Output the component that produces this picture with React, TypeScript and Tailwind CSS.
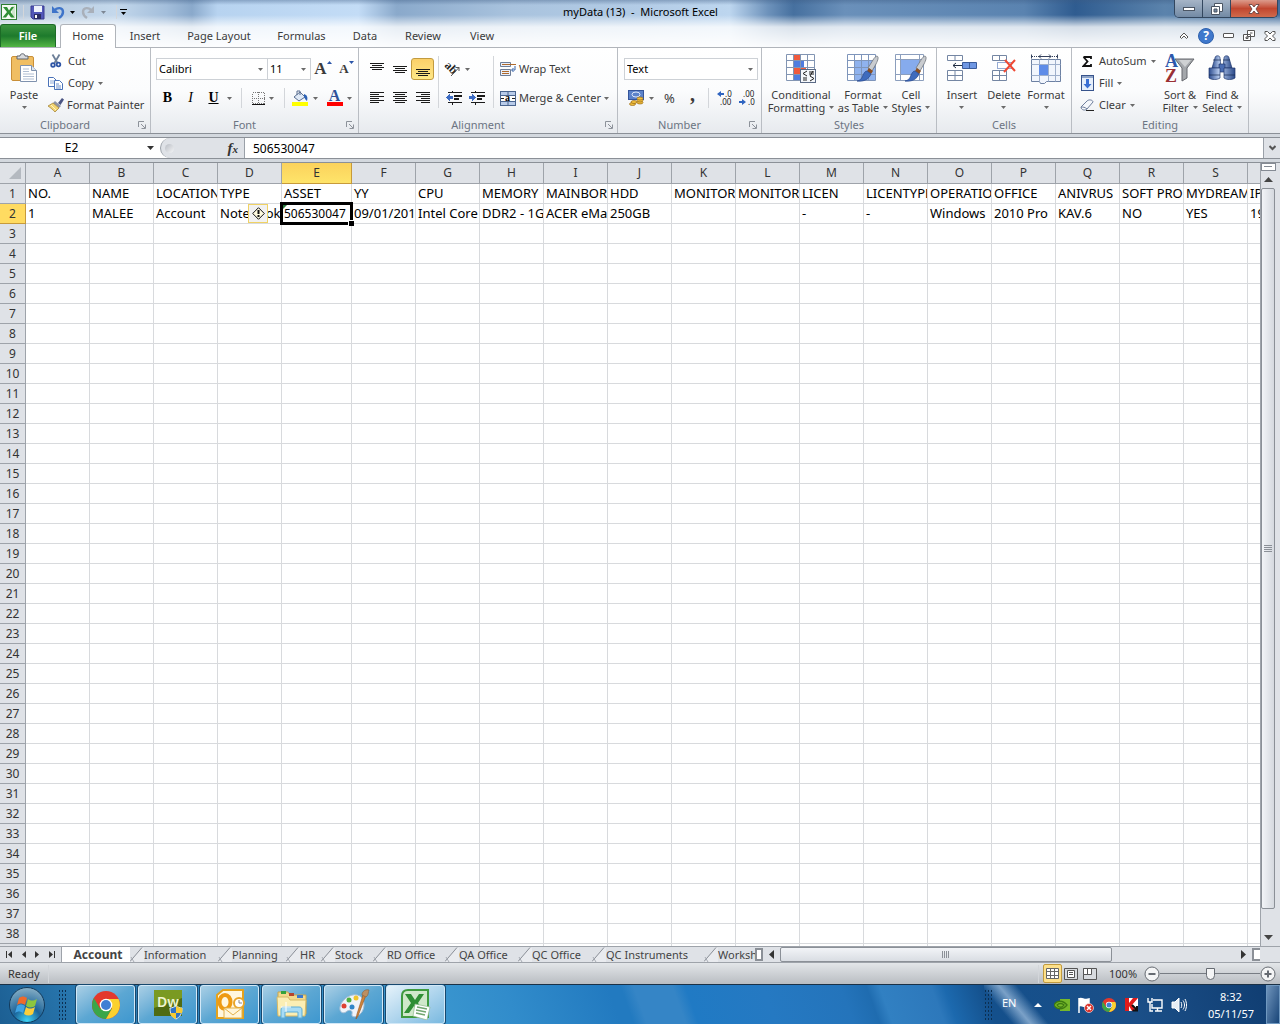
import type { ReactNode } from "react";
import clsx from "clsx";

const columns = [
  { id: "A", width: "w-16", head: "NO.", value: "1" },
  { id: "B", width: "w-16", head: "NAME", value: "MALEE" },
  { id: "C", width: "w-16", head: "LOCATION", value: "Account" },
  { id: "D", width: "w-16", head: "TYPE", value: "Notebook" },
  { id: "E", width: "w-[70px]", head: "ASSET", value: "506530047" },
  { id: "F", width: "w-16", head: "YY", value: "09/01/2014" },
  { id: "G", width: "w-16", head: "CPU", value: "Intel Core" },
  { id: "H", width: "w-16", head: "MEMORY", value: "DDR2 - 1G" },
  { id: "I", width: "w-16", head: "MAINBORD", value: "ACER eMa" },
  { id: "J", width: "w-16", head: "HDD", value: "250GB" },
  { id: "K", width: "w-16", head: "MONITOR", value: "" },
  { id: "L", width: "w-16", head: "MONITOR", value: "" },
  { id: "M", width: "w-16", head: "LICEN", value: "-" },
  { id: "N", width: "w-16", head: "LICENTYPE", value: "-" },
  { id: "O", width: "w-16", head: "OPERATION", value: "Windows" },
  { id: "P", width: "w-16", head: "OFFICE", value: "2010 Pro" },
  { id: "Q", width: "w-16", head: "ANIVRUS", value: "KAV.6" },
  { id: "R", width: "w-16", head: "SOFT PRO", value: "NO" },
  { id: "S", width: "w-16", head: "MYDREAM", value: "YES" },
  { id: "T", width: "w-16", head: "IP", value: "192" },
];

const rows = Array.from({ length: 39 }, (_, i) => i + 1);

const menuTabs = [
  { name: "Insert", width: "w-[58px]" },
  { name: "Page Layout", width: "w-[90px]" },
  { name: "Formulas", width: "w-[75px]" },
  { name: "Data", width: "w-[52px]" },
  { name: "Review", width: "w-16" },
  { name: "View", width: "w-[54px]" },
];

const sheets = [
  { name: "Information", width: "w-[88px]" },
  { name: "Planning", width: "w-[68px]" },
  { name: "HR", width: "w-[35px]" },
  { name: "Stock", width: "w-[52px]" },
  { name: "RD Office", width: "w-[72px]" },
  { name: "QA Office", width: "w-[73px]" },
  { name: "QC Office", width: "w-[74px]" },
  { name: "QC Instruments", width: "w-[112px]" },
  { name: "Workshop", width: "w-[90px]" },
];

const Caret = ({ className = "text-[#6a6a6a]" }: { className?: string }) => (
  <svg width="5" height="3" viewBox="0 0 5 3" className={clsx("shrink-0", className)} fill="currentColor">
    <path d="M0 0h5L2.500 3z" />
  </svg>
);

const Divider = ({ className = "h-5" }: { className?: string }) => (
  <span className={clsx("w-px shrink-0 bg-[#d3d6da]", className)} />
);

/* ---------- small icons ---------- */

const ExcelMark = () => (
  <svg width="16" height="16" viewBox="0 0 16 16">
    <rect x=".5" y=".5" width="15" height="15" fill="#f4faf3" stroke="#2e7d32" />
    <path d="M11 2h3v12h-3z" fill="#cfe6cd" />
    <path d="M2 3h4l2 3.500L10.500 3H13L9.500 8l4 5.500H10L7.500 10 5 13.500H1.500L6 8z" fill="#2f8f35" />
  </svg>
);

const SaveIcon = () => (
  <svg width="15" height="15" viewBox="0 0 15 15">
    <path d="M1 1h13v13H3l-2-2z" fill="#5257b8" stroke="#3a3d91" />
    <path d="M4 1h8v6H4z" fill="#eef2fb" />
    <path d="M4 9h7v5H4z" fill="#2b2d63" />
    <path d="M5 10h2v3H5z" fill="#fff" />
  </svg>
);

const UndoIcon = ({ color, flip }: { color: string; flip?: boolean }) => (
  <svg width="14" height="14" viewBox="0 0 14 14" className={flip ? "-scale-x-100" : ""}>
    <path d="M3 6c3-4 9-4 9 1 0 2-1 4-4 6" fill="none" stroke={color} strokeWidth="2.400" />
    <path d="M1 1v7h7z" fill={color} />
  </svg>
);

const CutIcon = () => (
  <svg width="12" height="14" viewBox="0 0 12 14" fill="none">
    <path d="M2.500 0.500 7.500 9M9.500 0.500 4.500 9" stroke="#6d7f98" strokeWidth="1.800" />
    <circle cx="3" cy="11" r="1.800" stroke="#2e55a5" strokeWidth="1.800" />
    <circle cx="8.500" cy="10.500" r="1.800" stroke="#2e55a5" strokeWidth="1.800" />
  </svg>
);

const CopyIcon = () => (
  <svg width="16" height="13" viewBox="0 0 16 13" fill="#fff" stroke="#4a72b8">
    <path d="M.5.5h5l3 3v6h-8z" />
    <path d="M2 4h4M2 6h4" stroke="#8fa9d6" />
    <path d="M6.500 3.500h5l3 3v6h-8z" />
    <path d="M8 7h3M8 9h5M8 11h5" stroke="#6d8fca" />
  </svg>
);

const BrushIcon = () => (
  <svg width="16" height="14" viewBox="0 0 16 14">
    <path d="M10 5l4-5 2 1.500L12.500 7z" fill="#4b5582" />
    <path d="M7 3l6 5-2 2-6-5z" fill="#8d93a5" />
    <path d="M5 5l6 5-4 4C5 12 3 10 0 8z" fill="#f1d473" stroke="#9c7a2c" strokeWidth=".7" />
    <path d="M3 7l5 5" stroke="#fff4c2" />
  </svg>
);

const PasteIcon = () => (
  <svg width="28" height="32" viewBox="0 0 28 32">
    <rect x="1.500" y="3.500" width="22" height="24" rx="1.500" fill="#f0be63" stroke="#c98f38" />
    <path d="M7 6V3h3c0-3 5-3 5 0h3v3z" fill="#d8dade" stroke="#60656d" />
    <path d="M10.500 12.500h11l5 5v11h-16z" fill="#fff" stroke="#7f92ae" />
    <path d="M21.500 12.500v5h5" fill="#dce5f1" stroke="#7f92ae" />
    <path d="M13 16h6M13 18.500h6M13 21h11M13 23.500h11M13 26h11" stroke="#b1bfd3" />
  </svg>
);

const Lines = ({ widths, top = 0, align = "center" }: { widths: number[]; top?: number; align?: string }) => (
  <svg width="14" height="14" viewBox="0 0 14 14" fill="#1b1b1b" shapeRendering="crispEdges">
    {widths.map((w, i) => (
      <rect
        key={i}
        x={align === "left" ? 0 : align === "right" ? 14 - w : (14 - w) / 2}
        y={top + i * 2}
        width={w}
        height="1"
      />
    ))}
  </svg>
);

const IndentIcon = ({ flip }: { flip?: boolean }) => (
  <svg width="17" height="14" viewBox="0 0 17 14" shapeRendering="crispEdges">
    <path d="M2 1h14v1H2zM8 4h8v2H8zM8 7h5v2H8zM2 11h14v1H2zM6 0h1v2H6zM6 12h1v2H6z" fill="#1b1b1b" />
    <path d={flip ? "M0 5h3V3l4 3.500L3 10V8H0z" : "M7 5H4V3L0 6.500 4 10V8h3z"} fill="#3d6cc4" />
  </svg>
);

const OrientationIcon = () => (
  <svg width="17" height="16" viewBox="0 0 17 16">
    <text x="0" y="5" fontSize="12" fontWeight="700" fontFamily="Liberation Serif, serif" transform="rotate(45 0 5)" fill="#222">
      ab
    </text>
    <path d="M7 15L15 6.500M11.500 6.500H15v3.500" stroke="#555" fill="none" />
  </svg>
);

const WrapIcon = () => (
  <svg width="16" height="14" viewBox="0 0 16 14">
    <path d="M.5.5h10v4H.5zM.5 7.500h10v6H.5z" fill="#eaf0fa" stroke="#6d7d97" />
    <path d="M2 2.500h14M2 9.500h7M2 11.500h7" stroke="#b06a2c" />
    <path d="M15 4v4h-3M13.500 6L11.500 8l2 2" stroke="#3562a8" fill="none" />
  </svg>
);

const MergeIcon = () => (
  <svg width="16" height="15" viewBox="0 0 16 15">
    <rect x=".5" y=".5" width="15" height="14" fill="#b8cbe9" stroke="#4a658f" />
    <path d="M1 4.500h14M1 10.500h14M8 1v3M8 11v3" stroke="#4a658f" />
    <path d="M1 5h14v5H1z" fill="#fff" />
    <path d="M1 7.500h3M12 7.500h3" stroke="#222" />
    <text x="5" y="10" fontSize="10" fontWeight="700" fontFamily="Liberation Serif, serif">
      a
    </text>
  </svg>
);

const BordersIcon = () => (
  <svg width="13" height="13" viewBox="0 0 13 13" shapeRendering="crispEdges">
    <path d="M.5.5h12v11H.5zM6.500 0v12M0 6.500h13" fill="none" stroke="#777" strokeDasharray="1 1" />
    <path d="M0 12h13v1H0z" fill="#111" />
  </svg>
);

const FillColorIcon = () => (
  <svg width="17" height="16" viewBox="0 0 17 16">
    <path d="M2 7l6-5 5 5-6 4z" fill="#dfe9f6" stroke="#5b6f91" />
    <path d="M5 5V1h3v4" fill="none" stroke="#5b6f91" />
    <path d="M12 4c3 1 4 3 3 7-2-1-2-3-3-4z" fill="#2d62b5" />
    <path d="M0 12h16v4H0z" fill="#ffff00" />
  </svg>
);

const CurrencyIcon = () => (
  <svg width="17" height="16" viewBox="0 0 17 16">
    <rect x=".5" y=".5" width="15" height="9" fill="#5b82ca" stroke="#34559b" />
    <ellipse cx="8" cy="4.500" rx="4" ry="2.500" fill="none" stroke="#dce7fa" />
    <g fill="#f1bf3c" stroke="#96681a" strokeWidth=".7">
      <ellipse cx="12" cy="12.500" rx="3" ry="1.500" />
      <ellipse cx="12" cy="10.500" rx="3" ry="1.500" />
      <ellipse cx="12" cy="8.500" rx="3" ry="1.500" />
      <ellipse cx="4.500" cy="14" rx="3" ry="1.500" />
      <ellipse cx="6" cy="12" rx="3" ry="1.500" />
    </g>
  </svg>
);

const DecimalIcon = ({ more }: { more?: boolean }) => (
  <svg width="17" height="16" viewBox="0 0 17 16" fontSize="8" fontFamily="Noto Sans, sans-serif" fill="#222">
    <path d={more ? "M8 3H5V1L1 4l4 3V5h3z" : "M0 11h3V9l4 3-4 3v-2H0z"} fill="#2f64c0" />
    <text x={more ? 9 : 4} y="7">{more ? ".0" : ".00"}</text>
    <text x={more ? 4 : 9} y="15">{more ? ".00" : ".0"}</text>
  </svg>
);

const gridPath = "M.5.5h28v26H.5zM.5 6.500h28M.5 13.500h28M.5 20.500h28M7.500.5v26M14.500.5v26M21.500.5v26";

const PaintBrush = () => (
  <>
    <path d="M30 2c2 1 1 4-1 8l-4 7-4-3 5-8c1-2 3-4 4-4z" fill="#c9ccd0" stroke="#70757c" strokeWidth=".8" />
    <path d="M22 14l4 3-2 3-4-3z" fill="#8b4f22" />
    <path d="M20 17l4 3c-2 5-7 8-14 7 4-1 5-3 6-6 1-2 2-4 4-4z" fill="#3f6bbd" stroke="#27488c" strokeWidth=".7" />
  </>
);

const ConditionalIcon = () => (
  <svg width="31" height="30" viewBox="0 0 31 30">
    <rect x=".5" y=".5" width="28" height="26" fill="#fff" />
    <path d="M7 1h7v5H7zM7 13h13v7H7z" fill="#f05a3d" />
    <path d="M7 7h11v6H7zM7 20h7v6H7z" fill="#4f7de0" />
    <path d={gridPath} fill="none" stroke="#8295b3" />
    <rect x="14.500" y="15.500" width="15" height="13" fill="#f5f8fc" stroke="#5a6a85" />
    <path d="M21 17l-4 2.500 4 2.500M17 24h4M17 26h4M23 18h5M23 20h5M27 17l-3 5M24 22l4 2.500-4 2.500" fill="none" stroke="#222" />
  </svg>
);

const FormatTableIcon = () => (
  <svg width="32" height="30" viewBox="0 0 32 30">
    <rect x=".5" y=".5" width="28" height="26" fill="#fff" />
    <path d="M8 7h20v19H8z" fill="#8fb2ee" />
    <path d={gridPath} fill="none" stroke="#7e95bb" />
    <PaintBrush />
  </svg>
);

const CellStylesIcon = () => (
  <svg width="32" height="30" viewBox="0 0 32 30">
    <path d="M.5.500h28v26H.5zM.5 5.500h28M.5 20.500h28M5.500.5v26M24.500.5v26" fill="#fff" stroke="#8b9ebd" />
    <path d="M6 6h18v14H6z" fill="#86abed" />
    <PaintBrush />
  </svg>
);

const InsertCellsIcon = () => (
  <svg width="31" height="30" viewBox="0 0 31 30" fill="#fff" stroke="#7486a3">
    <path d="M.5 1.500h15v5H.5zM8 1.500v5M.5 16.500h15v10H.5zM8 16.500v10M.5 21.500h15" />
    <path d="M15.500 8.500h14v6h-14zM22.500 8.500v6" fill="#6f97e3" stroke="#3a5b9b" />
    <path d="M6 11.500h9M9 9l-3 2.500L9 14" fill="none" stroke="#222f44" />
  </svg>
);

const DeleteCellsIcon = () => (
  <svg width="31" height="30" viewBox="0 0 31 30" fill="#fff" stroke="#7486a3">
    <path d="M3.500 1.500h14v5h-14zM10.500 1.500v5M3.500 16.500h14v10h-14zM10.500 16.500v10M3.500 21.500h14" />
    <path d="M8.500 8.500h14v6h-14z" strokeDasharray="1 1" stroke="#2f58a8" />
    <path d="M16 6l10 11M26 6L15 18" stroke="#ef4934" strokeWidth="2" />
  </svg>
);

const FormatCellsIcon = () => (
  <svg width="31" height="31" viewBox="0 0 31 31" fill="none">
    <path d="M1 2.500h25" stroke="#34405c" strokeDasharray="1 1" />
    <path d="M8 2.500h12M10 .5L8 2.500l2 2M18 .5l2 2-2 2M.5.5v4M26.500.5v4" stroke="#34405c" />
    <path d="M.5 5.500h29v22h-14l-2 2h-4l-1-2h-8z" fill="#f2f6fd" stroke="#6d81a3" />
    <path d="M.5 10.500h29M.5 21.500h29M8.500 5.500v22M17.500 5.500v22M24.500 5.500v22" stroke="#9fb0cc" />
    <path d="M8 11h9v10H8z" fill="#5e8ce8" />
  </svg>
);

const SigmaIcon = () => (
  <svg width="11" height="11" viewBox="0 0 11 11">
    <path d="M1.500 1h7.500v2M1.500 1l4 4.500-4 4.500h7.500V8" fill="none" stroke="#111" strokeWidth="1.800" />
  </svg>
);

const FillIcon = () => (
  <svg width="13" height="16" viewBox="0 0 13 16">
    <rect x=".5" y=".5" width="12" height="15" fill="#e6effb" stroke="#38548c" />
    <path d="M1 1h11v2H1z" fill="#8ea4c8" />
    <path d="M5 4h3v5h2.500l-4 4.500-4-4.500H5z" fill="#3a6fd4" />
  </svg>
);

const EraserIcon = () => (
  <svg width="15" height="12" viewBox="0 0 15 12">
    <path d="M1 8l6-6c2-2 6-1 6 1L7 10c-2 2-6 1-6-2z" fill="#f5f7fb" stroke="#6e7e9c" />
    <path d="M1 8c2 0 4 0 6 2" fill="none" stroke="#6e7e9c" />
    <path d="M6 11.500h8" stroke="#222" />
  </svg>
);

const SortIcon = () => (
  <svg width="30" height="30" viewBox="0 0 30 30" fontFamily="Liberation Serif, serif" fontWeight="700" fontSize="18">
    <path d="M10 5h19l-7 9v10l-5 3V14z" fill="#a4a7ab" stroke="#66696e" />
    <path d="M14 6h12l-6 7z" fill="#cfd1d3" />
    <text x="0" y="13" fill="#2c57ab">A</text>
    <text x="0" y="28" fill="#9a3034">Z</text>
  </svg>
);

const FindIcon = () => (
  <svg width="28" height="28" viewBox="0 0 28 28" stroke="#20386e" strokeWidth=".7">
    <defs>
      <linearGradient id="barrel">
        <stop offset="0" stopColor="#2d4d8f" />
        <stop offset=".4" stopColor="#bcd0f2" />
        <stop offset="1" stopColor="#2b4a8a" />
      </linearGradient>
    </defs>
    <path d="M7 3c0-3 5-3 5 0l1 10H4zM16 3c0-3 5-3 5 0l3 10h-9z" fill="url(#barrel)" />
    <path d="M11 9h6v8h-6z" fill="#4a6db3" />
    <path d="M1 13h11v10c-3 2-8 2-11 0zM16 13h11v10c-3 2-8 2-11 0z" fill="url(#barrel)" />
    <path d="M1 20h11M16 20h11M5 5h8M15 5h7" stroke="#16284f" />
  </svg>
);

const Chrome = ({ size }: { size: number }) => (
  <svg width={size} height={size} viewBox="0 0 28 28">
    <circle cx="14" cy="14" r="14" fill="#e3382c" />
    <path d="M1.900 7A14 14 0 0 0 14 28l6-10.500L8 17.500z" fill="#3aa648" />
    <path d="M14 28A14 14 0 0 0 26.600 8H14l6 9.500z" fill="#fbd12f" />
    <circle cx="14" cy="14" r="6.300" fill="#fff" />
    <circle cx="14" cy="14" r="5" fill="#3f7fd4" />
  </svg>
);

/* ---------- ribbon pieces ---------- */

const Group = ({ label, width, launcher, children }: { label: string; width: string; launcher?: boolean; children: ReactNode }) => (
  <section className={clsx("flex h-full shrink-0 flex-col border-r border-[#b9bdc3]", width)}>
    <div className="h-[68px]">{children}</div>
    <div className={clsx("flex h-[17px] items-center text-[#6b7482]", launcher && "pr-1")}>
      <h2 className={clsx("flex-1 text-center", launcher && "pr-2")}>{label}</h2>
      {launcher && (
        <button aria-label={`${label} settings`}>
          <svg width="8" height="8" viewBox="0 0 8 8" fill="none" stroke="#8d929a">
            <path d="M.5 6V.5H6M3 3l4 4M7.500 3.500v4h-4" />
          </svg>
        </button>
      )}
    </div>
  </section>
);

const SmallButton = ({ icon, label, caret, className }: { icon: ReactNode; label: string; caret?: boolean; className?: string }) => (
  <button className={clsx("flex h-[22px] items-center gap-1 whitespace-nowrap", className)}>
    <span className="flex w-4 justify-center">{icon}</span>
    <span>{label}</span>
    {caret && <Caret />}
  </button>
);

const LargeButton = ({ icon, lines, width }: { icon: ReactNode; lines: string[]; width: string }) => (
  <button className={clsx("flex flex-col items-center gap-[3px] pt-[5px] leading-[13px]", width)}>
    <span className="flex h-8 items-center">{icon}</span>
    <span className="flex flex-col items-center whitespace-nowrap">
      <span>{lines[0]}</span>
      <span className="flex h-[13px] items-center gap-1">
        {lines[1]}
        <Caret />
      </span>
    </span>
  </button>
);

const IconButton = ({ label, active, caret, className = "w-[23px]", children }: { label: string; active?: boolean; caret?: boolean; className?: string; children: ReactNode }) => (
  <button
    aria-label={label}
    className={clsx(
      "flex h-[22px] shrink-0 items-center justify-center gap-1",
      active && "rounded-[3px] border border-[#c29b3f] bg-linear-to-b from-[#fbd069] to-[#fee887]",
      className
    )}
  >
    {children}
    {caret && <Caret />}
  </button>
);

const SelectBox = ({ label, value, className }: { label: string; value: string; className: string }) => (
  <label className={clsx("flex h-[22px] items-center border border-[#cdd1d6] bg-white pr-1 text-black", className)}>
    <span className="sr-only">{label}</span>
    <select defaultValue={value} className="min-w-0 flex-1 appearance-none pl-[2px]">
      <option>{value}</option>
    </select>
    <Caret />
  </label>
);

const Header = () => (
  <header className="border-b border-[#b0b4ba] bg-[linear-gradient(to_bottom,rgba(60,90,130,0.4)_0,rgba(255,255,255,0)_5px,rgba(255,255,255,0)_15px,rgba(255,255,255,0.8)_27px,rgba(255,255,255,0.96)_46px),linear-gradient(to_right,#b4c6d9_0,#c4d8ec_9%,#a3bedb_13%,#8aa9cb_15%,#b7d3f0_17%,#c3dcf6_28%,#8aa9cb_31%,#a9c3de_40%,#b3cce6_50%,#bdd6ef_57%,#6d92bb_60%,#46709f_62%,#6a90ba_66%,#5a83b0_80%,#2f5c90_84%,#5b83ac_91%,#456f9e_100%)]">
    <div className="flex h-6 items-start">
      <div className="flex h-6 flex-1 items-center gap-[6px] pl-[1px]">
        <ExcelMark />
        <Divider className="h-[14px] bg-[#6d7b8d]" />
        <button aria-label="Save"><SaveIcon /></button>
        <button aria-label="Undo" className="flex items-center gap-[5px]">
          <UndoIcon color="#3f74c9" />
          <Caret className="text-black" />
        </button>
        <button aria-label="Redo" className="flex items-center gap-[6px]">
          <UndoIcon color="#a9b0ba" flip />
          <Caret className="text-[#7d8794]" />
        </button>
        <Divider className="ml-1 h-[14px] bg-[#4b5563]" />
        <button aria-label="Customize toolbar" className="-ml-[3px] flex flex-col items-center gap-[2px]">
          <span className="h-px w-[7px] bg-black" />
          <Caret className="text-black" />
        </button>
      </div>
      <h1 className="pt-1 text-[11px] leading-4 whitespace-pre text-black">myData (13)  -  Microsoft Excel</h1>
      <div className="flex flex-1 justify-end">
        <div className="mr-[2px] flex h-[18px] w-[104px] overflow-hidden rounded-b-[5px] border border-t-0 border-[#33475f]">
          <button aria-label="Minimize" className="flex w-7 items-center justify-center border-r border-[#33475f] bg-linear-to-b from-[#a6b5c7] to-[#738aa5]">
            <span className="h-1 w-3 border border-[#4b5563] bg-white" />
          </button>
          <button aria-label="Restore" className="flex w-7 items-center justify-center border-r border-[#33475f] bg-linear-to-b from-[#a6b5c7] to-[#738aa5]">
            <svg width="12" height="12" viewBox="0 0 12 12" fill="#fff" stroke="#4b5563">
              <path d="M3.500.5h8v8h-8z" />
              <path d="M.5 3.500h8v8h-8z" />
              <path d="M3 6h3v3H3z" fill="#738aa5" />
            </svg>
          </button>
          <button aria-label="Close" className="flex flex-1 items-center justify-center bg-linear-to-b from-[#dc9b8c] via-[#c1462f] to-[#d06a4c]">
            <svg width="12" height="10" viewBox="0 0 12 10" fill="#fff" stroke="#5c3a3a" strokeWidth=".8">
              <path d="M1 .5h3l2 2.500L8 .500h3L8 5l3 4.500H8L6 7 4 9.500H1L4 5z" />
            </svg>
          </button>
        </div>
      </div>
    </div>
    <nav className="flex h-[23px] items-end text-[#3b3b3b]">
      <button className="h-[23px] w-14 rounded-t-[3px] border border-b-0 border-[#1c6b26] bg-linear-to-b from-[#3c9440] via-[#1d7a2c] to-[#53b544] font-semibold text-white">
        File
      </button>
      <button className="z-10 -mb-px ml-1 h-6 w-14 rounded-t-[3px] border border-b-0 border-[#b0b4ba] bg-white pb-[2px]">
        Home
      </button>
      {menuTabs.map((tab) => (
        <button key={tab.name} className={clsx("h-[23px] whitespace-nowrap", tab.width)}>
          {tab.name}
        </button>
      ))}
      <div className="ml-auto flex h-[23px] items-center gap-[9px] pr-1 text-[#555]">
        <button aria-label="Collapse ribbon">
          <svg width="10" height="7" viewBox="0 0 10 7" fill="#fff" stroke="#555">
            <path d="M1 5l4-4 4 4-1.500 1.500L5 4 2.500 6.500z" />
          </svg>
        </button>
        <button aria-label="Help" className="flex size-4 items-center justify-center rounded-full border border-[#2e61ad] bg-[#3f78cc] text-[12px] font-bold text-white">
          ?
        </button>
        <button aria-label="Minimize workbook" className="h-[5px] w-[11px] rounded-[1px] border border-[#555] bg-white" />
        <button aria-label="Restore workbook">
          <svg width="12" height="11" viewBox="0 0 12 11" fill="#fff" stroke="#555">
            <path d="M4.500.5h7v6h-7zM.5 4.500h7v6h-7zM3 7h2v1.500H3zM7 3h2.500" />
          </svg>
        </button>
        <button aria-label="Close workbook">
          <svg width="12" height="10" viewBox="0 0 12 10" fill="#fff" stroke="#555">
            <path d="M1 .5h2.500L6 3 8.500.5H11v2L8.500 5 11 7.500v2H8.500L6 7 3.500 9.500H1v-2L3.500 5 1 2.500z" />
          </svg>
        </button>
      </div>
    </nav>
  </header>
);

const Ribbon = () => (
  <div className="flex h-[86px] overflow-hidden border-b border-[#8b9097] bg-linear-to-b from-white via-[#fbfcfd] to-[#e7eaee] text-[#3b3b3b]">
    <Group label="Clipboard" width="w-[151px]" launcher>
      <div className="flex pl-[6px]">
        <LargeButton icon={<PasteIcon />} lines={["Paste"]} width="w-9" />
        <div className="flex flex-col pt-[2px] pl-[6px]">
          <SmallButton icon={<CutIcon />} label="Cut" />
          <SmallButton icon={<CopyIcon />} label="Copy" caret />
          <SmallButton icon={<BrushIcon />} label="Format Painter" className="gap-[3px]" />
        </div>
      </div>
    </Group>

    <Group label="Font" width="w-[208px]" launcher>
      <div className="flex flex-col gap-[7px] pt-[10px] pl-[5px]">
        <div className="flex items-center">
          <SelectBox label="Font name" value="Calibri" className="w-28" />
          <SelectBox label="Font size" value="11" className="-ml-px w-11" />
          <IconButton label="Grow font" className="w-6">
            <span className="flex items-start font-['Liberation_Serif',serif] text-[17px] leading-5 font-bold">
              A
              <svg width="5" height="3" className="mt-[2px]" fill="#2a55a8"><path d="M0 3h5L2.500 0z" /></svg>
            </span>
          </IconButton>
          <IconButton label="Shrink font">
            <span className="flex items-start font-['Liberation_Serif',serif] text-[13px] leading-5 font-bold">
              A
              <svg width="5" height="3" className="mt-[2px]" fill="#2a55a8"><path d="M0 0h5L2.500 3z" /></svg>
            </span>
          </IconButton>
        </div>
        <div className="flex items-center font-['Liberation_Serif',serif] text-[14px] text-black">
          <IconButton label="Bold"><b>B</b></IconButton>
          <IconButton label="Italic"><i>I</i></IconButton>
          <IconButton label="Underline" caret className="w-9"><b className="mr-1 underline">U</b></IconButton>
          <Divider className="mx-[3px] h-5" />
          <IconButton label="Borders" caret className="w-9"><BordersIcon /></IconButton>
          <Divider className="mx-[3px] h-5" />
          <IconButton label="Fill color" caret className="w-[34px]"><FillColorIcon /></IconButton>
          <IconButton label="Font color" caret className="w-[34px]">
            <span className="flex w-4 flex-col items-center border-b-4 border-[#f00] text-[16px] leading-3 font-bold text-[#2f5299]">
              A
            </span>
          </IconButton>
        </div>
      </div>
    </Group>

    <Group label="Alignment" width="w-[259px]" launcher>
      <div className="flex h-full items-center pl-[6px]">
        <div className="flex flex-col gap-[7px] pt-[3px]">
          <div className="flex">
            <IconButton label="Top align"><Lines widths={[14, 10, 14, 10]} top={1} /></IconButton>
            <IconButton label="Middle align"><Lines widths={[14, 10, 14, 10]} top={4} /></IconButton>
            <IconButton label="Bottom align" active><Lines widths={[14, 10, 14, 10]} top={7} /></IconButton>
          </div>
          <div className="flex">
            <IconButton label="Align left"><Lines widths={[14, 9, 14, 9, 14, 9]} top={1} align="left" /></IconButton>
            <IconButton label="Center"><Lines widths={[14, 10, 14, 10, 14, 10]} top={1} /></IconButton>
            <IconButton label="Align right"><Lines widths={[14, 9, 14, 9, 14, 9]} top={1} align="right" /></IconButton>
          </div>
        </div>
        <Divider className="mx-1 h-[52px]" />
        <div className="flex flex-col gap-[7px] pt-[3px]">
          <IconButton label="Orientation" caret className="w-7"><OrientationIcon /></IconButton>
          <div className="flex">
            <IconButton label="Decrease indent"><IndentIcon /></IconButton>
            <IconButton label="Increase indent"><IndentIcon flip /></IconButton>
          </div>
        </div>
        <Divider className="mr-[6px] ml-1 h-[52px]" />
        <div className="flex flex-col gap-[7px] pt-[3px]">
          <SmallButton icon={<WrapIcon />} label="Wrap Text" className="gap-[3px]" />
          <SmallButton icon={<MergeIcon />} label="Merge & Center" caret className="gap-[3px]" />
        </div>
      </div>
    </Group>

    <Group label="Number" width="w-[144px]" launcher>
      <div className="flex flex-col gap-[7px] pt-[10px] pl-[6px]">
        <SelectBox label="Number format" value="Text" className="w-[134px]" />
        <div className="flex items-center">
          <IconButton label="Accounting format" caret className="w-[34px]"><CurrencyIcon /></IconButton>
          <IconButton label="Percent style"><span className="text-[13px]">%</span></IconButton>
          <IconButton label="Comma style"><b className="-mt-2 font-['Liberation_Serif',serif] text-[20px] leading-4">,</b></IconButton>
          <Divider className="mx-1 h-5" />
          <IconButton label="Increase decimal"><DecimalIcon more /></IconButton>
          <IconButton label="Decrease decimal"><DecimalIcon /></IconButton>
        </div>
      </div>
    </Group>

    <Group label="Styles" width="w-[175px]">
      <div className="flex pl-[4px]">
        <LargeButton icon={<ConditionalIcon />} lines={["Conditional", "Formatting"]} width="w-[70px]" />
        <LargeButton icon={<FormatTableIcon />} lines={["Format", "as Table"]} width="w-[54px]" />
        <LargeButton icon={<CellStylesIcon />} lines={["Cell", "Styles"]} width="w-[42px]" />
      </div>
    </Group>

    <Group label="Cells" width="w-[135px]">
      <div className="flex pl-1">
        <LargeButton icon={<InsertCellsIcon />} lines={["Insert"]} width="w-[42px]" />
        <LargeButton icon={<DeleteCellsIcon />} lines={["Delete"]} width="w-[42px]" />
        <LargeButton icon={<FormatCellsIcon />} lines={["Format"]} width="w-[42px]" />
      </div>
    </Group>

    <Group label="Editing" width="w-[177px]">
      <div className="flex pl-[7px]">
        <div className="flex w-[80px] flex-col pt-[2px]">
          <SmallButton icon={<SigmaIcon />} label="AutoSum" caret />
          <SmallButton icon={<FillIcon />} label="Fill" caret />
          <SmallButton icon={<EraserIcon />} label="Clear" caret />
        </div>
        <LargeButton icon={<SortIcon />} lines={["Sort &", "Filter"]} width="w-[42px]" />
        <LargeButton icon={<FindIcon />} lines={["Find &", "Select"]} width="w-[42px]" />
      </div>
    </Group>
  </div>
);

const FormulaBar = () => (
  <div className="flex h-[22px] shrink-0 border-y border-[#8b9097] bg-white text-[12px] text-black">
    <label className="flex w-40 items-center pr-[6px]">
      <span className="sr-only">Name box</span>
      <input defaultValue="E2" className="w-full min-w-0 pr-1 text-center outline-none" />
      <svg width="7" height="4" className="shrink-0" fill="#333"><path d="M0 0h7L3.500 4z" /></svg>
    </label>
    <div className="flex w-[85px] items-center justify-between rounded-l-full border-r border-l border-[#9aa0a8] bg-[#dfe2e7] pr-[6px] pl-1">
      <span className="size-[9px] rounded-full bg-linear-to-br from-[#b9bdc4] to-[#f5f6f8]" />
      <button aria-label="Insert function" className="font-['Liberation_Serif',serif] text-[15px] leading-4 font-bold text-[#333] italic">
        f<span className="text-[11px]">x</span>
      </button>
    </div>
    <input aria-label="Formula" defaultValue="506530047" className="min-w-0 flex-1 pt-px pl-2 outline-none" />
    <button aria-label="Expand formula bar" className="flex w-[17px] items-center justify-center border-l border-[#9aa0a8] bg-[#dfe2e7]">
      <svg width="7" height="6" fill="none" stroke="#555" strokeWidth="2"><path d="M.5 1l3 3 3-3" /></svg>
    </button>
  </div>
);

const Grid = () => (
  <div className="flex min-h-0 flex-1 border-t border-[#8b9097]">
    <div className="min-w-0 flex-1 overflow-hidden bg-white">
      <table className="w-px table-fixed border-separate border-spacing-0 text-[13px] leading-[19px] text-black">
        <colgroup>
          <col className="w-[26px]" />
          {columns.map((c) => (
            <col key={c.id} className={c.width} />
          ))}
        </colgroup>
        <thead>
          <tr className="text-[12px] leading-5 text-[#333]">
            <th className="h-[21px] border-r border-b border-[#9ea3aa] bg-[#dfe2e7] p-0">
              <svg width="12" height="12" className="ml-auto mr-1" fill="#b4b9c0" aria-label="Select all"><path d="M12 0v12H0z" /></svg>
            </th>
            {columns.map((c) => (
              <th
                key={c.id}
                scope="col"
                className={clsx(
                  "overflow-hidden border-r border-b p-0 font-normal",
                  c.id === "E" ? "border-[#c79a3a] bg-linear-to-b from-[#fbd25c] to-[#fee46a]" : "border-[#9ea3aa] bg-[#dfe2e7]"
                )}
              >
                {c.id}
              </th>
            ))}
          </tr>
        </thead>
        <tbody>
          {rows.map((row) => (
            <tr key={row}>
              <th
                scope="row"
                className={clsx(
                  "h-5 border-r border-b p-0 text-[12px] font-normal text-[#333]",
                  row === 2 ? "border-[#c79a3a] bg-[#ffdb61]" : "border-[#9ea3aa] bg-[#dfe2e7]"
                )}
              >
                {row}
              </th>
              {columns.map((c) => {
                const active = row === 2 && c.id === "E";
                const text = row === 1 ? c.head : row === 2 ? c.value : "";
                return (
                  <td
                    key={c.id}
                    className={clsx(
                      "h-5 border-r border-b border-[#d8dadd] py-0 pr-0 pl-[2px] whitespace-nowrap",
                      active ? "relative text-[12px]" : "overflow-hidden",
                      row === 2 && c.id === "D" && "relative"
                    )}
                  >
                    {text}
                    {active && (
                      <span className="absolute -top-[2px] -right-[2px] -bottom-[2px] -left-[2px] border-[3px] border-black">
                        <span className="absolute -right-1 -bottom-1 size-[6px] border-t border-l border-white bg-black" />
                        <span className="absolute top-0 left-0 border-t-4 border-r-4 border-t-[#2c7a3f] border-r-transparent" />
                      </span>
                    )}
                    {row === 2 && c.id === "D" && (
                      <button aria-label="Error options" className="absolute top-0 left-[30px] flex h-[19px] w-5 items-center justify-center border border-[#f0d264] bg-[#f1f1f1]">
                        <svg width="13" height="13" viewBox="0 0 13 13" fill="#fffbe0" stroke="#111">
                          <path d="M6.500.700l5.800 5.800-5.800 5.800L.700 6.500z" />
                          <path d="M6.500 3v4M6.500 8v2" strokeWidth="2" />
                        </svg>
                      </button>
                    )}
                  </td>
                );
              })}
            </tr>
          ))}
        </tbody>
      </table>
    </div>
    <div className="flex w-5 flex-col items-center border-l border-[#9ea3aa] bg-[#dfe2e7] pr-[5px]">
      <span className="flex h-2 w-[15px] items-center justify-center border border-[#858b94] bg-white">
        <span className="h-[2px] w-2 border-t border-[#858b94]" />
      </span>
      <button aria-label="Scroll up" className="flex h-[17px] items-center">
        <svg width="9" height="5" fill="#444"><path d="M0 5h9L4.500 0z" /></svg>
      </button>
      <div className="flex w-[14px] flex-1 items-center justify-center rounded-[2px] border border-[#8b9097] bg-linear-to-r from-[#f2f4f7] to-[#d5d9df]">
        <span className="h-[7px] w-2 bg-[repeating-linear-gradient(to_bottom,#8b9097_0,#8b9097_1px,transparent_1px,transparent_2px)]" />
      </div>
      <span className="h-[19px]" />
      <button aria-label="Scroll down" className="flex h-[18px] items-center">
        <svg width="9" height="5" fill="#444"><path d="M0 0h9L4.500 5z" /></svg>
      </button>
    </div>
  </div>
);

const Slash = () => (
  <svg width="14" height="15" viewBox="0 0 14 15" className="shrink-0" fill="none">
    <path d="M0 15L12 1h2v14z" fill="#e9ebef" />
    <path d="M0 14.500L12 .5" stroke="#8b9097" />
    <path d="M1 10l3 5" stroke="#a5aab2" />
  </svg>
);

const SheetBar = () => (
  <div className="flex h-[17px] shrink-0 border-y border-[#9ea3aa] bg-[#dfe2e7] text-[#444]">
    <div className="flex w-[59%] overflow-hidden">
      <div className="flex w-[62px] shrink-0 items-center justify-around border-r border-[#9ea3aa] px-[2px]">
        <button aria-label="First sheet"><svg width="7" height="7" fill="#333"><path d="M0 0h1v7H0zM6 0v7L2 3.500z" /></svg></button>
        <button aria-label="Previous sheet"><svg width="4" height="7" fill="#333"><path d="M4 0v7L0 3.500z" /></svg></button>
        <button aria-label="Next sheet"><svg width="4" height="7" fill="#333"><path d="M0 0v7l4-3.500z" /></svg></button>
        <button aria-label="Last sheet"><svg width="7" height="7" fill="#333"><path d="M6 0h1v7H6zM1 0v7l4-3.500z" /></svg></button>
      </div>
      <button className="w-[68px] shrink-0 bg-white pl-1 text-[12px] leading-[15px] font-bold">Account</button>
      {sheets.map((s) => (
        <button key={s.name} className={clsx("flex shrink-0 items-center whitespace-nowrap leading-[15px]", s.width)}>
          <Slash />
          <span>{s.name}</span>
        </button>
      ))}
    </div>
    <span className="my-px w-2 border-2 border-[#8b9097] bg-white" />
    <button aria-label="Scroll left" className="flex w-[17px] items-center justify-center">
      <svg width="5" height="9" fill="#333"><path d="M5 0v9L0 4.500z" /></svg>
    </button>
    <div className="flex-1">
      <div className="flex h-full w-[73%] items-center justify-center rounded-[2px] border border-[#8b9097] bg-linear-to-b from-[#f2f4f7] to-[#d9dde3]">
        <span className="h-[7px] w-2 bg-[repeating-linear-gradient(to_right,#8b9097_0,#8b9097_1px,transparent_1px,transparent_2px)]" />
      </div>
    </div>
    <button aria-label="Scroll right" className="flex w-[17px] items-center justify-center">
      <svg width="5" height="9" fill="#333"><path d="M0 0v9l5-4.500z" /></svg>
    </button>
    <span className="my-px mr-5 w-2 border-2 border-r-0 border-[#8b9097] bg-white" />
  </div>
);

const ZoomButton = ({ plus }: { plus?: boolean }) => (
  <button aria-label={plus ? "Zoom in" : "Zoom out"}>
    <svg width="16" height="16" viewBox="0 0 16 16" fill="#f4f5f6" stroke="#666b72">
      <circle cx="8" cy="8" r="7" />
      <path d={plus ? "M4.500 8h7M8 4.500v7" : "M4.500 8h7"} strokeWidth="2" />
    </svg>
  </button>
);

const StatusBar = () => (
  <div className="flex h-[21px] shrink-0 items-center bg-linear-to-b from-[#e3e6e9] to-[#b9bdc2] text-[#333]">
    <span className="w-12 pl-2">Ready</span>
    <Divider className="h-[18px] bg-[#8b9097]" />
    <div className="ml-auto flex items-center pr-1">
      <Divider className="h-[18px] bg-[#8b9097]" />
      <button aria-label="Normal view" className="ml-1 flex h-[19px] w-[19px] items-center justify-center rounded-[2px] border border-[#c29b3f] bg-[#fde08a]">
        <svg width="13" height="11" fill="#fff" stroke="#666"><path d="M.5.5h12v10H.5zM4.500.5v10M8.500.5v10M.5 3.500h12M.5 7.500h12" /></svg>
      </button>
      <button aria-label="Page layout view" className="ml-[2px]">
        <svg width="14" height="12" fill="#d8dbdf" stroke="#555"><path d="M.5.5h13v11H.5z" /><path d="M3.500 2.500h7v7h-7z" fill="#fff" /><path d="M5 4.500h4M5 6.500h4" /></svg>
      </button>
      <button aria-label="Page break view" className="ml-[5px]">
        <svg width="14" height="12" fill="#d8dbdf" stroke="#555"><path d="M.5.5h13v11H.5z" /><path d="M.5.5h4v6h-4zM4.500.5h4v6h-4z" fill="#fff" /></svg>
      </button>
      <span className="w-[47px] pl-3">100%</span>
      <ZoomButton />
      <input
        type="range"
        aria-label="Zoom"
        defaultValue={50}
        className="h-px w-[100px] appearance-none bg-[#777c83] [&::-webkit-slider-thumb]:h-3 [&::-webkit-slider-thumb]:w-[9px] [&::-webkit-slider-thumb]:appearance-none [&::-webkit-slider-thumb]:rounded-b-full [&::-webkit-slider-thumb]:border [&::-webkit-slider-thumb]:border-[#666b72] [&::-webkit-slider-thumb]:bg-[#f4f5f6]"
      />
      <ZoomButton plus />
    </div>
  </div>
);

const DreamweaverIcon = () => (
  <svg width="30" height="31" viewBox="0 0 30 31">
    <path d="M1 1h28v26H1z" fill="#4f6b12" />
    <path d="M1 1h28v8L1 19z" fill="#7a9a22" />
    <text x="4" y="18" fontSize="14" fontWeight="600" fontFamily="Noto Sans, sans-serif" fill="#f0f5cf">Dw</text>
    <path d="M17 19c2 0 4-1 6-2 2 1 4 2 6 2 0 6-2 9-6 11-4-2-6-5-6-11z" fill="#2f73c7" stroke="#dfe9f5" />
    <path d="M23 17v7h6c1-2 0-4 0-5-2 0-4-1-6-2zM23 24v6c-3-1-5-3-6-6z" fill="#f7cb34" />
  </svg>
);

const OutlookIcon = () => (
  <svg width="30" height="31" viewBox="0 0 30 31">
    <path d="M8 1h20v28H2V6z" fill="#fff7df" stroke="#e5a21c" strokeWidth="2" />
    <ellipse cx="10" cy="13" rx="5.500" ry="7" fill="none" stroke="#ee9a12" strokeWidth="4" />
    <circle cx="24" cy="14" r="5" fill="#fff" stroke="#e8a52a" strokeWidth="2" />
    <path d="M24 11v3h3" fill="none" stroke="#888" />
    <path d="M9 19h18v10H9z" fill="#fff6da" stroke="#e2b04a" />
    <path d="M9 19l9 7 9-7" fill="none" stroke="#e2b04a" />
  </svg>
);

const ExplorerIcon = () => (
  <svg width="32" height="31" viewBox="0 0 32 31">
    <path d="M2 3h10l2 3h16v19H2z" fill="#f2d98d" stroke="#c9a64d" />
    <path d="M5 2h5v3H5z" fill="#33a23d" />
    <path d="M13 4h5v3h-5z" fill="#b6442d" />
    <path d="M21 6h6v3h-6z" fill="#3a79cf" />
    <path d="M1 8h11l2 3h16l-1 16H2z" fill="#fbeeb4" stroke="#d7ba67" />
    <path d="M5 29v-8c0-2 1-3 3-3h15c2 0 3 1 3 3v8h-4v-6H9v6z" fill="#a8dcf5" stroke="#5badd9" />
    <path d="M10 13v10M5 18h10" stroke="#fff" />
  </svg>
);

const PaintIcon = () => (
  <svg width="34" height="31" viewBox="0 0 34 31">
    <path d="M3 18C5 9 16 3 23 7c6 4 5 15-1 19-4 3-8 2-7-1 1-4-3-5-6-2-3 2-7 0-6-5z" fill="#eef4fa" stroke="#a8bfd5" />
    <circle cx="7" cy="17" r="2.500" fill="#dd4132" />
    <circle cx="12" cy="11" r="2.500" fill="#4eaf3f" />
    <circle cx="19" cy="9" r="2.500" fill="#f2c52d" />
    <circle cx="15" cy="18" r="2.500" fill="#2f86c9" />
    <path d="M29 6L21 27l-2 3 1-5 6-19z" fill="#d0843b" stroke="#935620" strokeWidth=".6" />
    <path d="M25 6c0-4 4-6 7-5-1 2 0 5-3 7z" fill="#bc8f62" stroke="#84603e" strokeWidth=".6" />
  </svg>
);

const ExcelIcon = () => (
  <svg width="32" height="31" viewBox="0 0 32 31">
    <path d="M8 1h20v27H2V7c0-4 2-6 6-6z" fill="#cfe8ca" stroke="#3f9a3f" strokeWidth="2" />
    <path d="M5 5h6l4 6 4-6h5l-6 9 7 10h-6l-5-7-5 7H4l7-10z" fill="#2f8f35" />
    <path d="M15 15l15 3-3 13-14-4z" fill="#fff" stroke="#8fb98d" strokeWidth=".7" />
    <path d="M17 18l10 2M16 21l10 2M16 24l9 2" stroke="#72a670" strokeWidth="1.500" />
  </svg>
);

const apps = [
  { name: "Google Chrome", icon: <Chrome size={28} /> },
  { name: "Dreamweaver", icon: <DreamweaverIcon /> },
  { name: "Outlook", icon: <OutlookIcon /> },
  { name: "Windows Explorer", icon: <ExplorerIcon /> },
  { name: "Paint", icon: <PaintIcon /> },
  { name: "Excel", icon: <ExcelIcon />, active: true },
];

const Grip = () => (
  <span className="block h-8 w-[9px] shrink-0 bg-[radial-gradient(circle,#0b2f52_1px,transparent_1px)] bg-[size:3px_4px]" />
);

const Taskbar = () => (
  <footer className="flex h-10 shrink-0 items-center border-t border-[#1b3146] bg-[linear-gradient(70deg,#1c5f93_0,#2b7cb5_8%,#3a96cf_34%,#318ccb_40%,#227ac0_48%,#227ac0_49%,#3585c6_50%,#3585c6_53%,#207ac4_54%,#2579c2_60%,#2474bb_66%,#1f6cb0_68%,#3180c2_69%,#2d78bb_73%,#1c69ae_74%,#14508c_77%,#1b4f88_88%,#0f3c70_100%)]">
    <button aria-label="Start" className="mx-2 shrink-0">
      <svg width="38" height="38" viewBox="0 0 38 38">
        <defs>
          <radialGradient id="orb" cx=".5" cy=".95" r=".9">
            <stop offset="0" stopColor="#3ed4f5" />
            <stop offset=".45" stopColor="#1b6399" />
            <stop offset="1" stopColor="#7fa9c2" />
          </radialGradient>
        </defs>
        <circle cx="19" cy="19" r="17.500" fill="url(#orb)" stroke="#123a5c" />
        <path d="M11 12c3-2 5-2 8 0l-2 7c-3-2-5-2-8 0z" fill="#ee6a2b" />
        <path d="M20 13c3 2 5 2 9 0l-2 7c-3 2-6 2-9 0z" fill="#8cc63e" />
        <path d="M9 20c3-2 5-2 8 0l-2 7c-3-2-5-2-8 0z" fill="#3fa3e4" />
        <path d="M18 21c3 2 5 2 9 0l-2 7c-3 2-6 2-9 0z" fill="#fbce3a" />
      </svg>
    </button>
    <div className="ml-1 w-[18px]"><Grip /></div>
    <div className="flex h-full gap-[3px]">
      {apps.map((app) => (
        <button
          key={app.name}
          aria-label={app.name}
          className={clsx(
            "flex w-[59px] items-center justify-center rounded-[3px] border border-[#d2e8f7] shadow-[0_0_0_1px_#17486e]",
            app.active ? "bg-linear-to-br from-[#e5f2fa] to-[#79b9e0]" : "bg-linear-to-br from-[#a9cfe5] via-[#5ca7d3] to-[#3d97cf]"
          )}
        >
          {app.icon}
        </button>
      ))}
    </div>
    <div className="ml-auto flex h-full w-[296px] items-center bg-[linear-gradient(50deg,transparent_22px,rgba(190,215,240,0.6)_36px,transparent_50px)] text-white">
      <Grip />
      <span className="ml-[9px] w-[30px] pb-1">EN</span>
      <button aria-label="Show hidden icons" className="mr-3 ml-[2px]">
        <svg width="8" height="4" fill="#fff"><path d="M0 4h8L4 0z" /></svg>
      </button>
      <div className="flex flex-1 items-center gap-2">
        <svg width="16" height="12" viewBox="0 0 16 12">
          <path d="M6 0h10v12H6z" fill="#76b82a" />
          <path d="M0 6c3-5 9-5 13 0-4 5-10 5-13 0zM3 6c2-2 5-2 7 0-2 3-5 3-7 0z" fill="#76b82a" stroke="#3d7a12" strokeWidth="1.300" />
        </svg>
        <svg width="16" height="16" viewBox="0 0 16 16">
          <path d="M1 1v15M1 2c3-2 5 2 10 0v7c-5 2-7-2-10 0z" fill="#fff" stroke="#fff" strokeWidth="1.500" />
          <circle cx="11" cy="11" r="4.500" fill="#d92c24" stroke="#fff" strokeWidth=".6" />
          <path d="M9 9l4 4M13 9l-4 4" stroke="#fff" strokeWidth="1.500" />
        </svg>
        <Chrome size={14} />
        <svg width="15" height="15" viewBox="0 0 15 15">
          <path d="M1 1h13v13H1z" fill="#fff" />
          <path d="M1 1h4v5l4-5h5L8 8l4 6H8L5 9v5H1z" fill="#e01b1b" />
          <path d="M8 8l5 5M13 9v4.500H8.500" stroke="#111" strokeWidth="2" fill="none" />
        </svg>
        <svg width="16" height="16" viewBox="0 0 16 16" fill="none" stroke="#fff" strokeWidth="1.400">
          <path d="M6 3h9v8H5V7M8 14h7M10.500 11v3M1 1v4h4V1M3 5v9h3" />
        </svg>
        <svg width="16" height="16" viewBox="0 0 16 16" fill="none" stroke="#fff">
          <path d="M1 5h3l4-4v14l-4-4H1z" fill="#e8eef5" />
          <path d="M10 5c1 2 1 4 0 6M12 3.500c2 3 2 6 0 9M14 2c2 4 2 8 0 12" />
        </svg>
      </div>
      <div className="mr-3 w-[46px] text-center leading-[17px]">
        <div>8:32</div>
        <div>05/11/57</div>
      </div>
      <button aria-label="Show desktop" className="h-full w-[14px] border border-[#6f98c0] bg-linear-to-br from-[#6f94bb] to-[#174578]" />
    </div>
  </footer>
);

export default function App() {
  return (
    <div className="flex h-screen flex-col overflow-hidden bg-[#d3d8de] font-['Noto_Sans',sans-serif] text-[11px] leading-4">
      <Header />
      <div className="shrink-0 pb-[3px]">
        <Ribbon />
      </div>
      <FormulaBar />
      <div className="flex min-h-0 flex-1 flex-col pt-[3px]">
        <Grid />
      </div>
      <SheetBar />
      <StatusBar />
      <Taskbar />
    </div>
  );
}
